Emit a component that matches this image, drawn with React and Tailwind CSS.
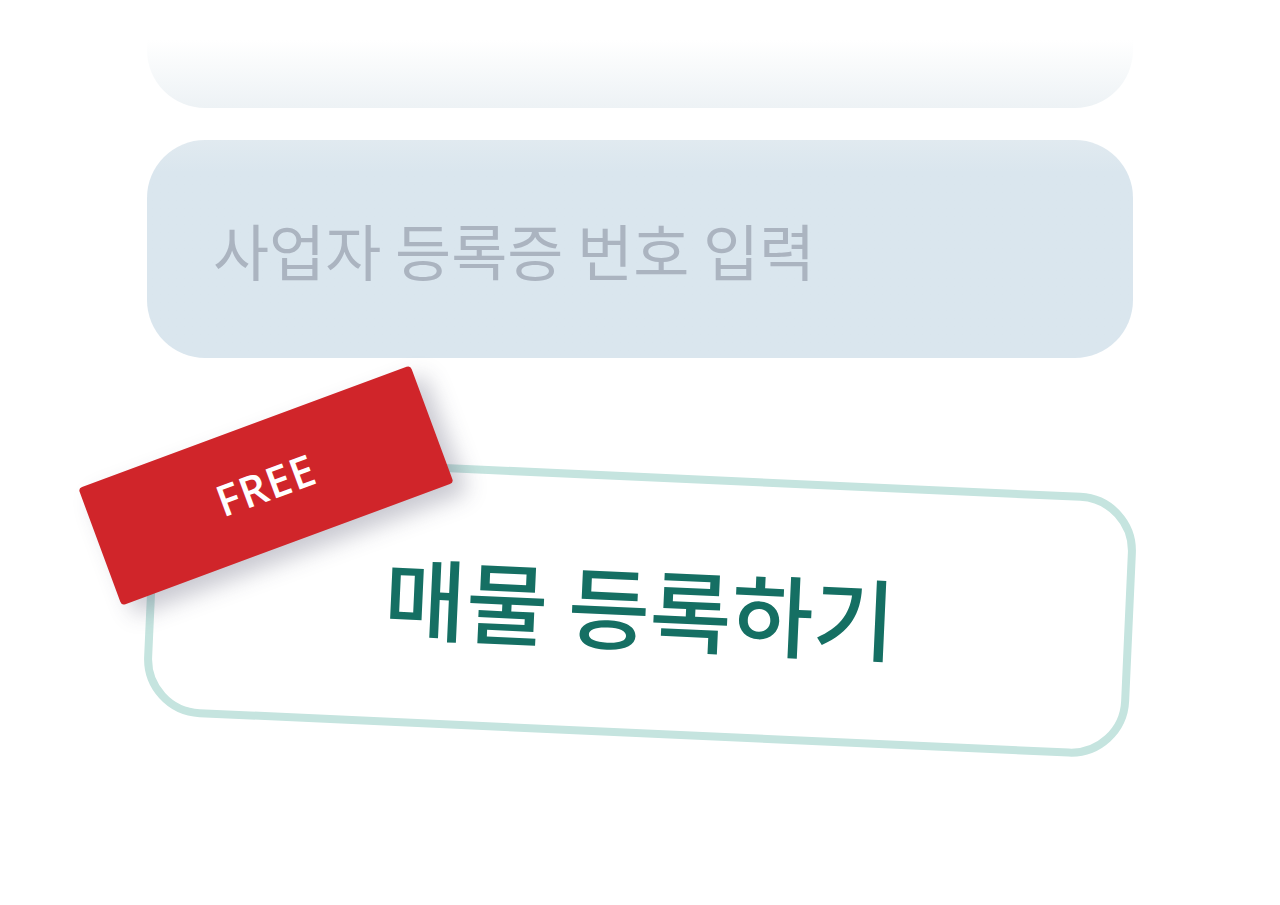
export default function App() {
  return (
    <div className="min-h-[905px] w-full bg-white" style={{ fontFamily: '"Noto Sans CJK KR", "Noto Sans", sans-serif' }}>
      <div className="mx-auto w-[986px] pt-[40px]">
        <div className="h-[68px] rounded-b-[58px] bg-gradient-to-b from-white to-[#edf2f5]" />
        <div className="mt-[32px] flex h-[218px] items-center rounded-[58px] bg-gradient-to-b from-[#e1eaf0] to-[#dae6ee] to-[15%] px-[66px]">
          <span className="text-[61px] font-normal leading-none text-[#abb4c0]">사업자 등록증 번호 입력</span>
        </div>
        <div className="relative mt-[115px]">
          <div className="flex h-[264px] rotate-[2.6deg] items-center justify-center rounded-[58px] border-[8px] border-[#c5e4df] bg-white">
            <span className="text-[89px] font-medium leading-none text-[#156f63]">매물 등록하기</span>
          </div>
          <div className="absolute left-[-58px] top-[-50px] flex h-[125px] w-[354px] rotate-[-20.3deg] items-center justify-center rounded-[4px] bg-[#d0252a] shadow-[10px_14px_22px_rgba(60,60,90,0.28)]">
            <span className="text-[43px] font-semibold tracking-[1px] text-white" style={{ fontFamily: '"Open Sans", "Noto Sans", sans-serif' }}>FREE</span>
          </div>
        </div>
      </div>
    </div>
  );
}
